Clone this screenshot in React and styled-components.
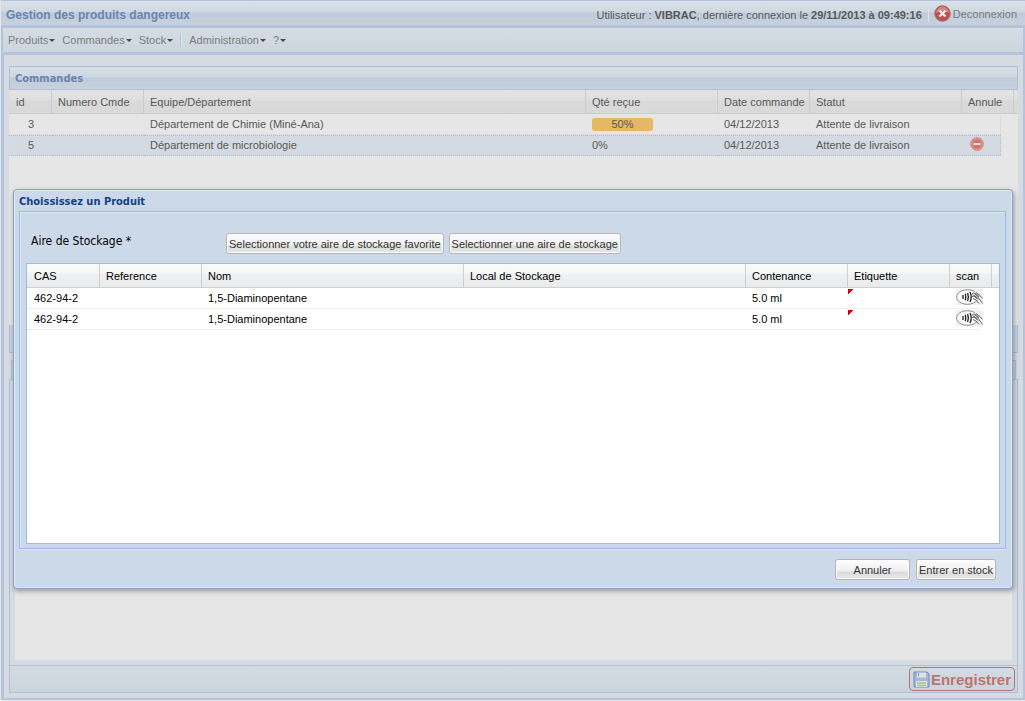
import React from "react";
import styled, { createGlobalStyle } from "styled-components";

const GlobalStyle = createGlobalStyle`
    * {
        box-sizing: border-box;
    }

    body {
        margin: 0;
        background: #e6e6e6;
        color: #595959;
        font-family: "Liberation Sans", Arial, sans-serif;
        font-size: 11px;
        line-height: 14px;
    }

    button {
        font-family: inherit;
        cursor: pointer;
    }
`;

const Page = styled.div`
    display: flex;
    flex-direction: column;
    min-height: 100vh;
    padding: 0 0 1px 1px;
`;

const TopBar = styled.header`
    display: flex;
    align-items: center;
    height: 28px;
    padding: 3px 8px 0 5px;
    border-top: 1px solid #b3c2db;
    border-bottom: 3px solid #b3c4dc;
    background: linear-gradient(#dbe1e8 0, #cfd8e2 11px, #becbdb 12px, #c8d2dd 100%);
`;

const AppTitle = styled.h1`
    flex: 1;
    margin: 0;
    color: #6c85ad;
    font-size: 12px;
    font-weight: bold;
`;

const Session = styled.div`
    padding-right: 6px;
    border-right: 1px solid #dfe4ea;
`;

const LogoutButton = styled.button`
    display: flex;
    align-items: center;
    gap: 2px;
    margin-left: 5px;
    padding: 0 0 2px;
    border: 0;
    background: none;
    color: #7d7d7d;
    font-size: 11px;
`;

const MenuBar = styled.nav`
    display: flex;
    align-items: center;
    height: 27px;
    padding: 0 5px;
    border: solid #b3c4dc;
    border-width: 0 2px 3px;
    background: linear-gradient(#d4dce4, #cdd5de);
`;

const MenuButton = styled.button`
    display: flex;
    align-items: center;
    gap: 1px;
    margin-right: 7px;
    padding: 0;
    border: 0;
    background: none;
    color: #7d7d7d;
    font-size: 11px;

    &::after {
        content: "";
        border: 3px solid transparent;
        border-top-color: #4a4a4a;
        border-bottom: 0;
    }
`;

const MenuSeparator = styled.span`
    width: 2px;
    height: 14px;
    margin-right: 7px;
    border-left: 1px solid #b5c3d8;
    border-right: 1px solid #e2e6eb;
`;

const Content = styled.main`
    display: flex;
    flex: 1;
    flex-direction: column;
    padding: 11px 5px 5px;
    border: solid #b3c4dc;
    border-width: 0 2px 2px 3px;
    background: #d6dbe2;
`;

const OrdersPanel = styled.section`
    display: flex;
    flex-direction: column;
    background: #e6e6e6;
`;

const PanelTitle = styled.h2`
    height: 24px;
    margin: 0;
    padding: 5px;
    border: 1px solid #adbfdc;
    background: linear-gradient(#d8dfe6 0, #cdd7e1 10px, #bfccdc 11px, #c8d2dd 100%);
    color: #6c85ad;
    font-family: "DejaVu Sans Condensed", Tahoma, sans-serif;
    font-size: 11px;
    font-weight: bold;
    line-height: 14px;
`;

const OrdersBody = styled.div`
    height: 235px;
`;

const PanelFooter = styled.div`
    height: 28px;
    border: 1px solid #adbfdc;
    border-top: 0;
    background: #ccd5df;
`;

const DetailPanel = styled.section`
    display: flex;
    flex: 1;
    flex-direction: column;
    margin-top: 7px;
`;

const TabStrip = styled.div`
    height: 19px;
    margin: 0 2px;
    border: 1px solid #adbfdc;
    border-bottom: 0;
    background: #ccd5df;
`;

const DetailBody = styled.div`
    display: flex;
    flex: 1;
    flex-direction: column;
    padding: 5px 5px 5px;
    border: 1px solid #adbfdc;
    border-bottom: 0;
    background: #d6dbe2;
`;

const DetailCanvas = styled.div`
    flex: 1;
    background: #e6e6e6;
`;

const DetailFooter = styled.footer`
    display: flex;
    align-items: center;
    justify-content: flex-end;
    height: 28px;
    padding: 0 2px;
    border: 1px solid #adbfdc;
    border-top-color: #b4c1d4;
    background: linear-gradient(#d3dbe3, #cbd3dc);
`;

const SaveButton = styled.button`
    display: flex;
    align-items: center;
    gap: 1px;
    height: 24px;
    padding: 0 3px;
    border: 1px solid #b9746e;
    border-radius: 4px;
    background: none;
    color: #bb756f;
    font-size: 15px;
    font-weight: bold;
`;

const Grid = styled.table`
    width: 100%;
    table-layout: fixed;
    border-collapse: separate;
    border-spacing: 0;
    white-space: nowrap;

    th,
    td {
        padding: 0 6px;
        font-weight: normal;
        text-align: left;
    }

    th {
        height: 24px;
        border-bottom: 1px solid ${(p) => (p.$dim ? "#cccccc" : "#d0d0d0")};
        border-right: 1px solid ${(p) => (p.$dim ? "#cccccc" : "#d0d0d0")};
        background: ${(p) =>
            p.$dim
                ? "linear-gradient(#e3e3e3 0, #dfdfdf 10px, #dadada 11px, #d9d9d9 100%)"
                : "linear-gradient(#f9f9f9 0, #f7f7f8 9px, #f0f1f2 10px, #e8eaec 100%)"};
    }

    th:last-child {
        border-right: 0;
    }

    th:first-child,
    td:first-child {
        padding-left: 7px;
    }

    td {
        height: 21px;
    }
`;

const OrderRow = styled.tr`
    td {
        padding-bottom: 1px;
    }

    td:not(:last-child) {
        border-top: 1px ${(p) => (p.$selected ? "dotted #aebcd6" : "solid #e6e6e6")};
        border-bottom: 1px ${(p) => (p.$selected ? "dotted #aebcd6" : "solid #dcdcdc")};
        background: ${(p) => (p.$selected ? "#d4dae2" : "#e6e6e6")};
    }

    td:first-child {
        text-align: center;
    }

    td:nth-last-child(2) {
        border-right: 1px ${(p) => (p.$selected ? "dotted #aebcd6" : "solid #dcdcdc")};
    }
`;

const Progress = styled.div`
    width: 61px;
    height: 13px;
    border-radius: 3px;
    background: #e6b764;
    line-height: 13px;
    text-align: center;
`;

const Overlay = styled.div`
    position: absolute;
    inset: 0;
    padding: 189px 12px 0 13px;
`;

const Dialog = styled.section`
    padding: 3px 6px 8px 5px;
    border: 1px solid #8ba3c7;
    border-radius: 4px;
    background: #ccd9e8;
    box-shadow: inset 0 0 0 1px #dfe8f6, 1px 2px 5px rgba(0, 0, 0, 0.35);
    color: #000;
`;

const DialogTitle = styled.h2`
    margin: 0;
    padding-bottom: 1px;
    color: #15428b;
    font-family: "DejaVu Sans Condensed", Tahoma, sans-serif;
    font-size: 11px;
    font-weight: bold;
    line-height: 17px;
`;

const DialogBody = styled.div`
    padding: 21px 5px 4px 6px;
    border: 1px solid #99bbe8;
    box-shadow: inset 1px 1px 0 #dfe8f6, 0 1px 0 #dfe8f6;
`;

const StorageField = styled.div`
    display: flex;
    gap: 5px;
    padding-bottom: 9px;
`;

const FieldLabel = styled.span`
    width: 190px;
    margin-left: 5px;
    font-family: "DejaVu Sans Condensed", Tahoma, sans-serif;
    font-size: 12px;
    line-height: 17px;
`;

const Button = styled.button`
    min-width: ${(p) => (p.$wide ? "75px" : "0")};
    height: 21px;
    padding: 0 2px;
    border: 1px solid #b5b5b5;
    border-radius: 3px;
    background: linear-gradient(#fdfdfd 0, #f0f0f0 11px, #dcdcdc 12px, #e6e6e6 100%);
    box-shadow: inset 0 0 0 1px #fff;
    color: #333;
    font-size: 11px;
    white-space: nowrap;
`;

const ProductGrid = styled.div`
    height: 281px;
    border: 1px solid #99bbe8;
    background: #fff;
`;

const ProductRow = styled.tr`
    td:not(:last-child) {
        border-bottom: 1px solid #ededed;
    }
`;

const DirtyCell = styled.td`
    background: linear-gradient(135deg, #c00 0 4px, transparent 4px) 0 1px / 8px 8px no-repeat;
`;

const IconButton = styled.button`
    display: block;
    padding: 1px 0 0;
    border: 0;
    background: none;
`;

const DialogActions = styled.div`
    display: flex;
    justify-content: flex-end;
    gap: 6px;
    padding: 10px 10px 0;
`;

const LogoutIcon = () => (
    <svg width="17" height="17" viewBox="0 0 17 17" aria-hidden="true">
        <circle cx="8.5" cy="8.5" r="7.7" fill="#c0504f" stroke="#a9605f" />
        <path d="M2 8a6.5 6.5 0 0 1 13 0c-4-2-9-2-13 0z" fill="#cf8482" />
        <path d="M5.5 5.5l6 6m0-6l-6 6" stroke="#ecebeb" strokeWidth="2.4" />
    </svg>
);

const CancelIcon = () => (
    <svg width="16" height="14" viewBox="-2 0 16 14" aria-hidden="true">
        <circle cx="7" cy="7" r="6.3" fill="#d4746b" stroke="#cf8a84" />
        <circle cx="7" cy="7" r="5.2" fill="none" stroke="#dfa19b" />
        <rect x="3.5" y="6" width="7" height="2" fill="#e9e3e3" />
    </svg>
);

const SaveIcon = () => (
    <svg width="17" height="17" viewBox="0 0 17 17" aria-hidden="true">
        <path d="M1 1h13l2 2v13H1z" fill="#a5b9da" stroke="#6d8ab8" />
        <path d="M4 1.5h9v5H4z" fill="#dde1e6" />
        <path d="M5 2h1v3H5z" fill="#8795a9" />
        <path d="M3 10h11v6H3z" fill="#dfe3e2" />
        <path d="M4 12h9M4 14.5h9" stroke="#a9c08b" strokeWidth="1.4" />
    </svg>
);

const ScanIcon = () => (
    <svg width="27" height="16" viewBox="0 0 27 16" aria-hidden="true">
        <rect width="27" height="16" fill="#f1f1f1" />
        <path
            d="M19 3.2C17.500 1.600 14.800.7 11.500.7 5.400.7.6 4 .6 8s4.800 7.300 10.900 7.300c4.400 0 8-1.600 9.700-4.300"
            fill="#f7f7f7"
            stroke="#8d8d8d"
        />
        <path d="M7 6v4M9.300 4.800q1 3.200 0 6.400M11.600 4q1.600 4 0 8M14 3q2.400 5 0 10" fill="none" stroke="#222" strokeWidth="1.3" />
        <path d="M15.500 5.500l2-1.500 3 1 2.500 3M16 7.500l3-.5 2 2.500M17 9.500l3 1.500 3 3.500M19 5l4 4.500 3.500 5M20 3.500l4 3 2.500 3" fill="none" stroke="#666" />
        <path d="M17 5.500l5 5" stroke="#444" />
    </svg>
);

const orders = [
    { id: 3, team: "Département de Chimie (Miné-Ana)", received: 50, date: "04/12/2013", status: "Attente de livraison" },
    { id: 5, team: "Département de microbiologie", received: 0, date: "04/12/2013", status: "Attente de livraison", selected: true },
];

const products = [
    { key: 1, cas: "462-94-2", name: "1,5-Diaminopentane", content: "5.0 ml" },
    { key: 2, cas: "462-94-2", name: "1,5-Diaminopentane", content: "5.0 ml" },
];

const Columns = ({ widths }) => (
    <colgroup>
        {widths.map((width, i) => (
            <col key={i} width={width} />
        ))}
    </colgroup>
);

const OrdersTable = () => (
    <Grid $dim>
        <Columns widths={[43, 92, undefined, 132, 92, 152, 39, 13, 4]} />
        <thead>
            <tr>
                <th>id</th>
                <th>Numero Cmde</th>
                <th>Equipe/Département</th>
                <th>Qté reçue</th>
                <th>Date commande</th>
                <th>Statut</th>
                <th colSpan={2}>Annule</th>
                <th></th>
            </tr>
        </thead>
        <tbody>
            {orders.map((order) => (
                <OrderRow key={order.id} $selected={order.selected}>
                    <td>{order.id}</td>
                    <td></td>
                    <td>{order.team}</td>
                    <td>{order.received > 0 ? <Progress>{order.received}%</Progress> : `${order.received}%`}</td>
                    <td>{order.date}</td>
                    <td>{order.status}</td>
                    <td>
                        {order.selected && (
                            <IconButton aria-label="Annule">
                                <CancelIcon />
                            </IconButton>
                        )}
                    </td>
                    <td colSpan={2}></td>
                </OrderRow>
            ))}
        </tbody>
    </Grid>
);

const ProductsTable = () => (
    <Grid>
        <Columns widths={[73, 102, 262, undefined, 102, 102, 30, 12, 7]} />
        <thead>
            <tr>
                <th>CAS</th>
                <th>Reference</th>
                <th>Nom</th>
                <th>Local de Stockage</th>
                <th>Contenance</th>
                <th>Etiquette</th>
                <th colSpan={2}>scan</th>
                <th></th>
            </tr>
        </thead>
        <tbody>
            {products.map((product) => (
                <ProductRow key={product.key}>
                    <td>{product.cas}</td>
                    <td></td>
                    <td>{product.name}</td>
                    <td></td>
                    <td>{product.content}</td>
                    <DirtyCell></DirtyCell>
                    <td>
                        <IconButton aria-label="scan">
                            <ScanIcon />
                        </IconButton>
                    </td>
                    <td colSpan={2}></td>
                </ProductRow>
            ))}
        </tbody>
    </Grid>
);

const ProductDialog = () => (
    <Overlay>
        <Dialog role="dialog" aria-labelledby="dialog-title">
            <DialogTitle id="dialog-title">Choississez un Produit</DialogTitle>
            <DialogBody>
                <StorageField>
                    <FieldLabel>Aire de Stockage *</FieldLabel>
                    <Button>Selectionner votre aire de stockage favorite</Button>
                    <Button>Selectionner une aire de stockage</Button>
                </StorageField>
                <ProductGrid>
                    <ProductsTable />
                </ProductGrid>
            </DialogBody>
            <DialogActions>
                <Button $wide>Annuler</Button>
                <Button>Entrer en stock</Button>
            </DialogActions>
        </Dialog>
    </Overlay>
);

const App = () => (
    <>
        <GlobalStyle />
        <Page>
            <TopBar>
                <AppTitle>Gestion des produits dangereux</AppTitle>
                <Session>
                    Utilisateur : <b>VIBRAC</b>, dernière connexion le <b>29/11/2013 à 09:49:16</b>
                </Session>
                <LogoutButton>
                    <LogoutIcon />
                    Deconnexion
                </LogoutButton>
            </TopBar>
            <MenuBar>
                <MenuButton>Produits</MenuButton>
                <MenuButton>Commandes</MenuButton>
                <MenuButton>Stock</MenuButton>
                <MenuSeparator />
                <MenuButton>Administration</MenuButton>
                <MenuButton>?</MenuButton>
            </MenuBar>
            <Content>
                <OrdersPanel>
                    <PanelTitle>Commandes</PanelTitle>
                    <OrdersBody>
                        <OrdersTable />
                    </OrdersBody>
                    <PanelFooter />
                </OrdersPanel>
                <DetailPanel>
                    <TabStrip />
                    <DetailBody>
                        <DetailCanvas />
                    </DetailBody>
                    <DetailFooter>
                        <SaveButton>
                            <SaveIcon />
                            Enregistrer
                        </SaveButton>
                    </DetailFooter>
                </DetailPanel>
            </Content>
        </Page>
        <ProductDialog />
    </>
);

export default App;
